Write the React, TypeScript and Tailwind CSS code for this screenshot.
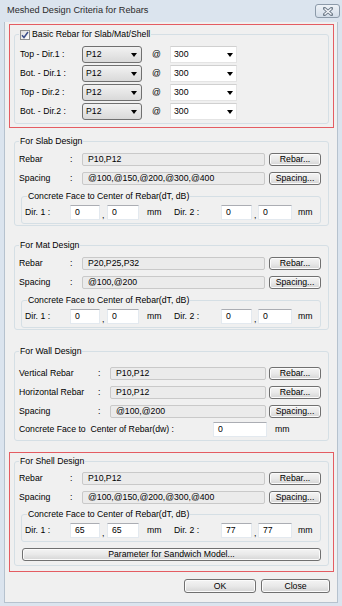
import React from "react";

const Btn = ({ children, className = "" }: { children: React.ReactNode; className?: string }) => (
  <div
    className={`flex items-center justify-center rounded-[3px] border border-[#707070] bg-linear-to-b from-[#f4f4f4] via-[#e9e9e9] to-[#d5d5d5] shadow-[inset_0_0_0_1px_#fbfbfb] ${className}`}
  >
    {children}
  </div>
);

const ReadOnly = ({ value, className = "" }: { value: string; className?: string }) => (
  <div className={`flex items-center rounded-[2px] border border-[#c9c9c9] bg-[#ebebeb] pl-[5px] ${className}`}>
    {value}
  </div>
);

const Input = ({ value, className = "" }: { value: string; className?: string }) => (
  <div className={`flex items-center border border-[#e3e9ef] border-t-[#abadb3] bg-white pl-[4px] ${className}`}>
    {value}
  </div>
);

const Arrow = () => (
  <svg width="6" height="4" viewBox="0 0 6 4">
    <path d="M0 0H6L3 4Z" fill="#000" />
  </svg>
);

const BasicRow = ({ label }: { label: string }) => (
  <div className="flex h-[17px] items-center">
    <span className="w-[62px]">{label}</span>
    <div className="flex h-full w-[60px] items-center justify-between rounded-[3px] border border-[#707070] bg-linear-to-b from-[#f2f2f2] to-[#d9d9d9] pl-[3px] pr-[4px]">
      <span>P12</span>
      <Arrow />
    </div>
    <span className="w-[28px] pl-[10px]">@</span>
    <div className="flex h-full w-[67px] items-center justify-between border border-[#e4e4e4] border-t-[#d0d0d0] bg-white pl-[3px] pr-[3px]">
      <span>300</span>
      <Arrow />
    </div>
  </div>
);

const RebarRow = ({ label, value, btn }: { label: string; value: string; btn: string }) => (
  <div className="flex h-[13px] items-center">
    <span className="w-[51px]">{label}</span>
    <span className="w-[12px]">:</span>
    <ReadOnly value={value} className="h-full w-[183px]" />
    <Btn className="ml-[4px] h-full w-[52px]">{btn}</Btn>
  </div>
);

const WallRow = ({ label, value, btn }: { label: string; value: string; btn: string }) => (
  <div className="flex h-[13px] items-center">
    <span className="w-[79px]">{label}</span>
    <span className="w-[12px]">:</span>
    <ReadOnly value={value} className="h-full w-[156px]" />
    <Btn className="ml-[3px] h-full w-[52px]">{btn}</Btn>
  </div>
);

const Cover = ({ d: [a, b, c, e] }: { d: string[] }) => (
  <fieldset className="ml-[2px] w-[300px] rounded-[3px] border border-[#d5dfe5] px-[3px] pb-[3px]">
    <legend className="ml-[2px] px-[1px] leading-[11px]">Concrete Face to Center of Rebar(dT, dB)</legend>
    <div className="mt-[3px] flex h-[15px] items-center">
      <span className="w-[45px]">Dir. 1 :</span>
      <Input value={a} className="h-full w-[30px]" />
      <span className="w-[7px] self-end pl-[2px]">,</span>
      <Input value={b} className="h-full w-[32px]" />
      <span className="w-[35px] pl-[8px]">mm</span>
      <span className="w-[47px]">Dir. 2 :</span>
      <Input value={c} className="h-full w-[31px]" />
      <span className="w-[6px] self-end pl-[2px]">,</span>
      <Input value={e} className="h-full w-[34px]" />
      <span className="pl-[6px]">mm</span>
    </div>
  </fieldset>
);

const DesignGroup = ({ title, rebar, spacing, cover }: { title: string; rebar: string; spacing: string; cover: string[] }) => (
  <fieldset className="w-[315px] rounded-[3px] border border-[#d5dfe5] px-[4px] pb-[1px]">
    <legend className="px-[1px] leading-[11px]">{title}</legend>
    <div className="mt-[6px] flex flex-col gap-[6px]">
      <RebarRow label="Rebar" value={rebar} btn="Rebar..." />
      <RebarRow label="Spacing" value={spacing} btn="Spacing..." />
    </div>
    <div className="mt-[6px]">
      <Cover d={cover} />
    </div>
  </fieldset>
);

export default function App() {
  return (
    <div className="flex h-[606px] w-[342px] flex-col bg-[#dbe4ee] font-['Liberation_Sans',Arial,sans-serif] text-[8.7px] leading-none text-black">
      <div className="flex h-[22px] items-center justify-between pl-[7px] pr-[2px]">
        <span className="text-[9.2px] text-[#2b2b2b]">Meshed Design Criteria for Rebars</span>
        <div className="flex h-[14px] w-[25px] items-center justify-center rounded-[3px] border border-[#8c9aa9] bg-linear-to-b from-[#eef2f7] to-[#d3dde8]">
          <svg width="10" height="9" viewBox="0 0 10 9">
            <path d="M1.5 1.5L8.5 7.5M8.5 1.5L1.5 7.5" stroke="#6f7c8a" strokeWidth="3.2" strokeLinecap="square" />
            <path d="M1.5 1.5L8.5 7.5M8.5 1.5L1.5 7.5" stroke="#f6f8fb" strokeWidth="1.4" />
          </svg>
        </div>
      </div>

      <div className="mb-[3px] ml-[4px] mr-[4px] flex flex-1 flex-col border border-[#b6c2ce] border-t-0 bg-[#f0f0f0] pl-[4px]">
        <div className="mt-[2px] w-[325px] border border-[#e45c62] pb-[3px] pl-[4px]">
          <fieldset className="mt-[4px] w-[315px] rounded-[3px] border border-[#d5dfe5] px-[4px] pb-[3px]">
            <legend className="flex items-center px-[1px] leading-[11px]">
              <span className="flex h-[10px] w-[10px] items-center justify-center border border-[#8e8f8f] bg-linear-to-br from-[#dcdcdc] to-white">
                <svg width="8" height="8" viewBox="0 0 8 8">
                  <path d="M1 4.2L3 6.5L7 1" fill="none" stroke="#3c4f8a" strokeWidth="1.5" />
                </svg>
              </span>
              <span className="ml-[2px]">Basic Rebar for Slab/Mat/Shell</span>
            </legend>
            <div className="mt-[6px] flex flex-col gap-[2px] pl-[1px]">
              <BasicRow label="Top - Dir.1 :" />
              <BasicRow label="Bot. - Dir.1 :" />
              <BasicRow label="Top - Dir.2 :" />
              <BasicRow label="Bot. - Dir.2 :" />
            </div>
          </fieldset>
        </div>

        <div className="ml-[5px] mt-[8px]">
          <DesignGroup title="For Slab Design" rebar="P10,P12" spacing="@100,@150,@200,@300,@400" cover={["0", "0", "0", "0"]} />
        </div>
        <div className="ml-[5px] mt-[14px]">
          <DesignGroup title="For Mat Design" rebar="P20,P25,P32" spacing="@100,@200" cover={["0", "0", "0", "0"]} />
        </div>

        <fieldset className="ml-[5px] mt-[16px] w-[315px] rounded-[3px] border border-[#d5dfe5] px-[4px] pb-[3px]">
          <legend className="px-[1px] leading-[11px]">For Wall Design</legend>
          <div className="mt-[10px] flex flex-col gap-[6px]">
            <WallRow label="Vertical Rebar" value="P10,P12" btn="Rebar..." />
            <WallRow label="Horizontal Rebar" value="P10,P12" btn="Rebar..." />
            <WallRow label="Spacing" value="@100,@200" btn="Spacing..." />
          </div>
          <div className="mt-[4px] flex h-[15px] items-center">
            <span className="w-[194px]">Concrete Face to&nbsp; Center of Rebar(dw) :</span>
            <Input value="0" className="h-full w-[54px]" />
            <span className="pl-[8px]">mm</span>
          </div>
        </fieldset>

        <div className="mt-[11px] w-[325px] border border-[#e45c62] pb-[5px] pl-[4px]">
          <fieldset className="mt-[3px] w-[315px] rounded-[3px] border border-[#d5dfe5] px-[4px] pb-[4px]">
            <legend className="px-[1px] leading-[11px]">For Shell Design</legend>
            <div className="mt-[5px] flex flex-col gap-[6px]">
              <RebarRow label="Rebar" value="P10,P12" btn="Rebar..." />
              <RebarRow label="Spacing" value="@100,@150,@200,@300,@400" btn="Spacing..." />
            </div>
            <div className="mt-[5px]">
              <Cover d={["65", "65", "77", "77"]} />
            </div>
            <Btn className="ml-[3px] mt-[6px] h-[13px] w-[299px]">Parameter for Sandwich Model...</Btn>
          </fieldset>
        </div>

        <div className="mt-[7px] flex w-[325px] justify-end gap-[5px] pr-[4px]">
          <Btn className="h-[14px] w-[72px]">OK</Btn>
          <Btn className="h-[14px] w-[69px]">Close</Btn>
        </div>
      </div>
    </div>
  );
}
